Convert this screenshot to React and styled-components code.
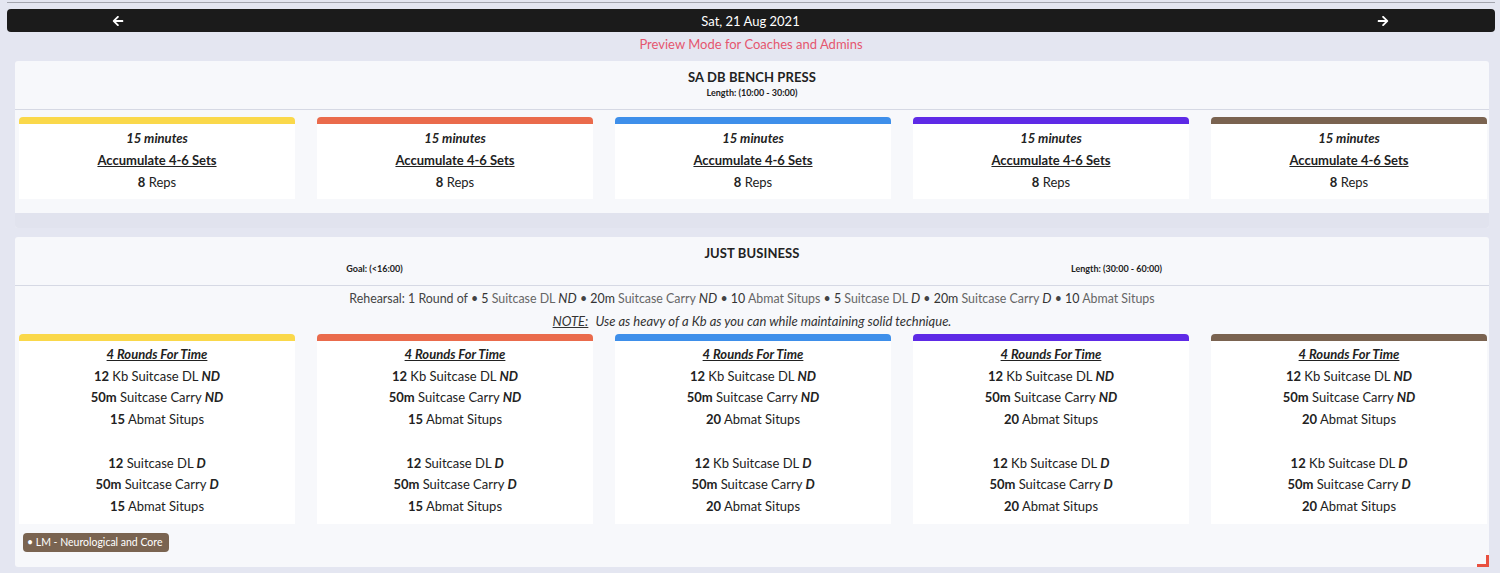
import styled, { createGlobalStyle } from "styled-components";
import { FaArrowLeft, FaArrowRight } from "react-icons/fa";

const GlobalStyle = createGlobalStyle`
  html, body {
    margin: 0;
    padding: 0;
    background: #e4e6f1;
    font-family: "Lato", "Open Sans", sans-serif;
    color: #222;
  }
`;

const Page = styled.div`
  padding: 2px 5px 0 7px;
  box-sizing: border-box;
  width: 1500px;
`;

const TopRule = styled.div`
  height: 1px;
  background: #a3a5ae;
  margin-bottom: 6px;
`;

const DateBar = styled.div`
  height: 23px;
  border-radius: 4px;
  background: #1b1b1b;
  color: #fff;
  display: grid;
  grid-template-columns: 1fr auto 1fr;
  align-items: center;
  font-size: 13px;
  padding: 0 106px 0 105px;
`;

const NavButton = styled.span`
  display: flex;
  justify-content: ${(p) => (p.$right ? "flex-end" : "flex-start")};
  align-items: center;
`;

const Preview = styled.div`
  text-align: center;
  color: #e5566f;
  font-size: 13px;
  line-height: 17px;
  margin: 4px 0 8px;
`;

const Sections = styled.div`
  display: flex;
  flex-direction: column;
  gap: 9px;
  margin: 0 6px 0 8px;
`;

const Section = styled.section`
  position: relative;
  background: #f7f8fb;
  border-radius: 3px;
`;

const SectionHead = styled.header`
  text-align: center;
  padding: 8px 0 8px;
  border-bottom: 1px solid #d6d9e4;
`;

const Title = styled.div`
  font-weight: 700;
  font-size: 13px;
  line-height: 16px;
  letter-spacing: 0.1px;
`;

const Sub = styled.div`
  font-weight: 700;
  font-size: 9px;
  line-height: 16px;
`;

const SubRow = styled.div`
  display: grid;
  grid-template-columns: 1fr 1fr;
  font-weight: 700;
  font-size: 9px;
  line-height: 16px;
  & > span:first-child { padding-right: 18px; }
  & > span:last-child { padding-right: 8px; }
`;

const Notes = styled.div`
  text-align: center;
  font-size: 13px;
  line-height: 22px;
  padding-top: 2px;
  color: #444;
`;

const Rehearsal = styled.div`
  font-size: 12.4px;
  height: 22px;
`;

const Amt = styled.span`
  color: #333;
`;

const Name = styled.span`
  color: #666;
`;

const Em = styled.em`
  color: #333;
  font-size: 13px;
  line-height: 1;
`;

const NoteLine = styled.div`
  font-style: italic;
  color: #333;
  & u { margin-right: 4px; }
`;

const Cards = styled.div`
  display: grid;
  grid-template-columns: repeat(5, 276px);
  column-gap: 22px;
  padding: ${(p) => p.$pad || "7px 4px 0"};
`;

const Card = styled.div`
  background: #fff;
  border-radius: 4px 4px 0 0;
  border-top: 7px solid ${(p) => p.$color};
  text-align: center;
  font-size: 13px;
  line-height: ${(p) => p.$lh || "22px"};
  padding: 3px 0 6px;
`;

const Line = styled.div`
  min-height: ${(p) => p.$lh || "22px"};
  font-weight: ${(p) => (p.$strong ? 700 : 400)};
  font-style: ${(p) => (p.$italic ? "italic" : "normal")};
  text-decoration: ${(p) => (p.$under ? "underline" : "none")};
`;

const B = styled.b`
  font-weight: 700;
`;

const I = styled.i`
  font-weight: 700;
`;

const Footer = styled.div`
  height: 15px;
  margin-top: 14px;
  background: #e1e3ee;
  border-radius: 0 0 3px 3px;
`;

const TagRow = styled.div`
  display: flex;
  align-items: flex-start;
  padding: 9px 8px 15px;
`;

const Tag = styled.span`
  display: block;
  background: #7a6451;
  color: #fff;
  font-size: 10.5px;
  line-height: 19px;
  padding: 0 7px 0 4px;
  border-radius: 4px;
`;

const Corner = styled.span`
  position: absolute;
  right: 0;
  bottom: 0;
  width: 9px;
  height: 9px;
  border-right: 3px solid #e9503f;
  border-bottom: 3px solid #e9503f;
`;

const colors = ["#fad84a", "#ea6b4c", "#3e8fea", "#5e2ae6", "#7a6350"];

const justBusiness = [
  { n: "15", a: "12", first: "Kb Suitcase DL", b: "12", second: "Suitcase DL" },
  { n: "15", a: "12", first: "Kb Suitcase DL", b: "12", second: "Suitcase DL" },
  { n: "20", a: "12", first: "Kb Suitcase DL", b: "12", second: "Kb Suitcase DL" },
  { n: "20", a: "12", first: "Kb Suitcase DL", b: "12", second: "Kb Suitcase DL" },
  { n: "20", a: "12", first: "Kb Suitcase DL", b: "12", second: "Kb Suitcase DL" },
];

const rehearsal = [
  ["5", "Suitcase DL", "ND"],
  ["20m", "Suitcase Carry", "ND"],
  ["10", "Abmat Situps", ""],
  ["5", "Suitcase DL", "D"],
  ["20m", "Suitcase Carry", "D"],
  ["10", "Abmat Situps", ""],
];

const LH = "21.7px";

const App = () => {
  return (
    <Page>
      <GlobalStyle />
      <TopRule />
      <DateBar>
        <NavButton>
          <FaArrowLeft size={12} />
        </NavButton>
        <span>Sat, 21 Aug 2021</span>
        <NavButton $right>
          <FaArrowRight size={12} />
        </NavButton>
      </DateBar>
      <Preview>Preview Mode for Coaches and Admins</Preview>

      <Sections>
        <Section>
          <SectionHead>
            <Title>SA DB BENCH PRESS</Title>
            <Sub>Length: (10:00 - 30:00)</Sub>
          </SectionHead>
          <Cards>
            {colors.map((c) => (
              <Card key={c} $color={c}>
                <Line $strong $italic>15 minutes</Line>
                <Line $strong $under>Accumulate 4-6 Sets</Line>
                <Line>
                  <B>8</B> Reps
                </Line>
              </Card>
            ))}
          </Cards>
          <Footer />
        </Section>

        <Section>
          <SectionHead>
            <Title>JUST BUSINESS</Title>
            <SubRow>
              <span>Goal: (&lt;16:00)</span>
              <span>Length: (30:00 - 60:00)</span>
            </SubRow>
          </SectionHead>
          <Notes>
            <Rehearsal>
              Rehearsal: 1 Round of
              {rehearsal.map(([a, n, s], i) => (
                <span key={i}>
                  {" • "}
                  <Amt>{a}</Amt> <Name>{n}</Name>
                  {s && (
                    <>
                      {" "}
                      <Em>{s}</Em>
                    </>
                  )}
                </span>
              ))}
            </Rehearsal>
            <NoteLine>
              <u>NOTE:</u> Use as heavy of a Kb as you can while maintaining solid technique.
            </NoteLine>
          </Notes>
          <Cards $pad="2px 4px 0">
            {justBusiness.map((w, i) => (
              <Card key={i} $color={colors[i]} $lh={LH}>
                <Line $lh={LH} $strong $italic $under>4 Rounds For Time</Line>
                <Line $lh={LH}>
                  <B>{w.a}</B> {w.first} <I>ND</I>
                </Line>
                <Line $lh={LH}>
                  <B>50m</B> Suitcase Carry <I>ND</I>
                </Line>
                <Line $lh={LH}>
                  <B>{w.n}</B> Abmat Situps
                </Line>
                <Line $lh={LH} />
                <Line $lh={LH}>
                  <B>{w.b}</B> {w.second} <I>D</I>
                </Line>
                <Line $lh={LH}>
                  <B>50m</B> Suitcase Carry <I>D</I>
                </Line>
                <Line $lh={LH}>
                  <B>{w.n}</B> Abmat Situps
                </Line>
              </Card>
            ))}
          </Cards>
          <TagRow>
            <Tag>• LM - Neurological and Core</Tag>
          </TagRow>
          <Corner />
        </Section>
      </Sections>
    </Page>
  );
};

export default App;
